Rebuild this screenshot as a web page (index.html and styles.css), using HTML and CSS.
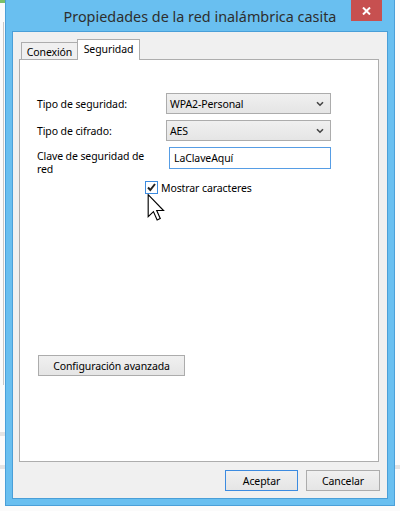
FILE: index.html
```html
<!DOCTYPE html>
<html lang="es">
<head>
<meta charset="utf-8">
<link rel="stylesheet" href="styles.css">
</head>
<body>
<div class="desk">
  <div class="bg-green"></div>
  <div class="bg-vline"></div>
  <div class="bg-hline bg-h1"></div>
  <div class="bg-hline bg-h2"></div>
  <div class="bg-hline bg-h3"></div>

  <div class="win">
    <div class="titlebar">
      <div class="title">Propiedades de la red inalámbrica casita</div>
      <div class="close">
        <svg width="9" height="8" viewBox="0 0 9 8"><path d="M1 0.5 L8 7.5 M8 0.5 L1 7.5" stroke="#fff" stroke-width="2"/></svg>
      </div>
    </div>
    <div class="client">
      <div class="tabs">
        <div class="tab">Conexión</div>
        <div class="tab active">Seguridad</div>
      </div>
      <div class="panel">
        <div class="form">
          <div class="lbl">Tipo de seguridad:</div>
          <div class="select"><span>WPA2-Personal</span>
            <svg width="8" height="6" viewBox="0 0 8 6"><path d="M1 1.2 L4 4.2 L7 1.2" fill="none" stroke="#444" stroke-width="1.6"/></svg>
          </div>
          <div class="lbl">Tipo de cifrado:</div>
          <div class="select"><span>AES</span>
            <svg width="8" height="6" viewBox="0 0 8 6"><path d="M1 1.2 L4 4.2 L7 1.2" fill="none" stroke="#444" stroke-width="1.6"/></svg>
          </div>
          <div class="lbl lbl-two">Clave de seguridad de<br>red</div>
          <div class="input">LaClaveAquí</div>
        </div>
        <div class="check-row">
          <div class="checkbox">
            <svg width="11" height="11" viewBox="0 0 11 11"><path d="M2 5.5 L4.3 8 L9 2" fill="none" stroke="#222" stroke-width="2"/></svg>
          </div>
          <span>Mostrar caracteres</span>
        </div>
        <div class="btn adv">Configuración avanzada</div>
      </div>
      <div class="actions">
        <div class="btn primary">Aceptar</div>
        <div class="btn">Cancelar</div>
      </div>
    </div>
  </div>

  <svg class="cursor" width="18" height="27" viewBox="0 0 12 19">
    <path d="M0.5 0.5 L0.5 16 L4.2 12.4 L6.8 18.3 L9 17.3 L6.5 11.6 L11.3 11.6 Z" fill="#fff" stroke="#000" stroke-width="0.8" stroke-linejoin="miter"/>
  </svg>
</div>
</body>
</html>
```

FILE: styles.css
```css
html, body {
  margin: 0;
  padding: 0;
  background: #ffffff;
}

.desk {
  position: relative;
  width: 400px;
  height: 511px;
  overflow: hidden;
  background: #fbfbfb;
  font-family: "Noto Sans", "Open Sans", sans-serif;
  font-size: 10.5px;
  letter-spacing: -0.1px;
  color: #000;
}

/* bits of the desktop behind the window */
.bg-green {
  position: absolute;
  left: 0;
  top: 0;
  width: 5px;
  height: 3px;
  background: #7bbf6a;
}
.bg-vline {
  position: absolute;
  left: 3px;
  top: 22px;
  width: 1px;
  height: 363px;
  background: #c8c8c8;
}
.bg-hline {
  position: absolute;
  height: 4px;
  background: #e3e3e3;
}
.bg-h1 { left: 0; top: 432px; width: 6px; }
.bg-h2 { left: 0; top: 465px; width: 6px; }
.bg-h3 { left: 394px; top: 465px; width: 6px; }

/* window */
.win {
  position: absolute;
  left: 5px;
  top: -1px;
  width: 390px;
  height: 507px;
  box-sizing: border-box;
  border: 1px solid #4a9fd8;
  background: #69bff0;
  padding: 0 6px 6px 6px;
  display: flex;
  flex-direction: column;
}

.titlebar {
  position: relative;
  height: 31px;
  flex: none;
  display: flex;
  align-items: center;
  justify-content: center;
}

.title {
  font-size: 14.4px;
  letter-spacing: 0;
  color: #2e2e2e;
  margin-top: 1px;
}

.close {
  position: absolute;
  right: 6px;
  top: 0;
  width: 31px;
  height: 21px;
  background: #c75050;
  display: flex;
  align-items: center;
  justify-content: center;
}

.client {
  flex: 1;
  box-sizing: border-box;
  border: 1px solid #4a9fd8;
  background: #f0f0f0;
  padding: 7px 7px 0 6px;
  display: flex;
  flex-direction: column;
}

.tabs {
  display: flex;
  align-items: flex-end;
  padding-left: 2px;
  height: 20px;
  position: relative;
  z-index: 1;
}

.tab {
  box-sizing: border-box;
  height: 17px;
  width: 56px;
  border: 1px solid #adadad;
  border-right: none;
  border-bottom: none;
  background: #f0f0f0;
  display: flex;
  align-items: center;
  justify-content: center;
  padding-top: 1px;
}

.tab.active {
  width: 63px;
  height: 21px;
  border-right: 1px solid #adadad;
  background: #ffffff;
  margin-bottom: -1px;
  padding-top: 0;
  padding-bottom: 2px;
}

.panel {
  width: 360px;
  height: 403px;
  box-sizing: border-box;
  border: 1px solid #adadad;
  background: #ffffff;
  padding: 33px 0 0 17px;
  display: flex;
  flex-direction: column;
  align-items: flex-start;
}

.form {
  display: grid;
  grid-template-columns: 129px 165px;
  grid-template-rows: 21px 21px 22px;
  row-gap: 6px;
}

.lbl {
  display: flex;
  align-items: center;
}

.lbl-two {
  display: block;
  align-self: start;
  padding-top: 3px;
  line-height: 13px;
}

.select {
  box-sizing: border-box;
  border: 1px solid #acacac;
  background: linear-gradient(#f0f0f0, #e5e5e5);
  display: flex;
  align-items: center;
  justify-content: space-between;
  padding: 0 6px 0 3px;
}

.input {
  box-sizing: border-box;
  margin-left: 3px;
  border: 1px solid #569de5;
  background: #fff;
  display: flex;
  align-items: center;
  padding-left: 4px;
}

.check-row {
  margin-top: 12px;
  margin-left: 108px;
  display: flex;
  align-items: center;
  gap: 3px;
  height: 13px;
}

.checkbox {
  box-sizing: border-box;
  width: 13px;
  height: 13px;
  border: 1px solid #3c8be0;
  background: #fff;
  display: flex;
  align-items: center;
  justify-content: center;
}

.btn {
  box-sizing: border-box;
  height: 21px;
  border: 1px solid #acacac;
  background: linear-gradient(#f0f0f0, #e5e5e5);
  display: flex;
  align-items: center;
  justify-content: center;
  color: #000;
}

.adv {
  margin-top: 161px;
  margin-left: 1px;
  width: 147px;
}

.actions {
  display: flex;
  justify-content: flex-end;
  gap: 8px;
  margin-top: 8px;
}

.actions .btn {
  width: 74px;
}

.actions .btn.primary {
  width: 73px;
  border-color: #3c8be0;
}

.cursor {
  position: absolute;
  left: 147px;
  top: 194px;
}
```
